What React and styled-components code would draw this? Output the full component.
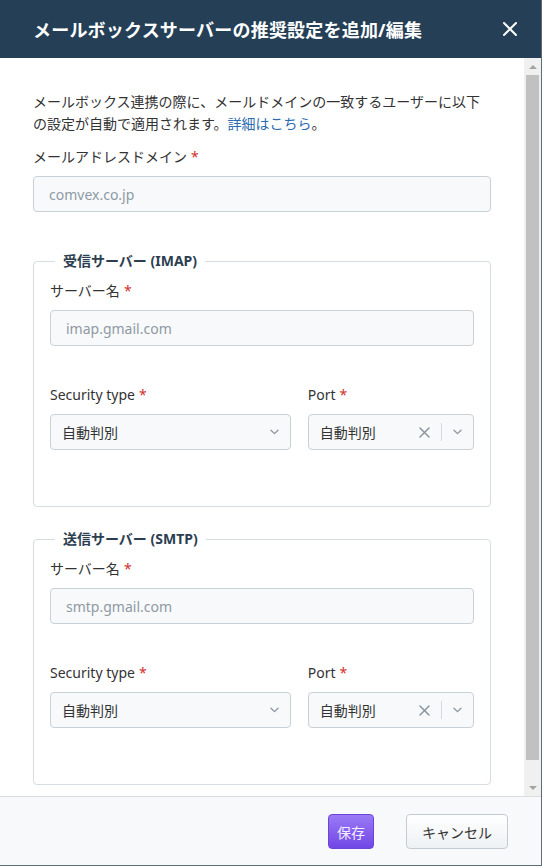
import React from 'react'
import styled, { createGlobalStyle } from 'styled-components'

const GlobalStyle = createGlobalStyle`
  html, body {
    margin: 0;
    padding: 0;
    background: #ffffff;
  }

  body {
    font-family: "Noto Sans", "Noto Sans CJK JP", sans-serif;
    color: #333333;
  }

  * {
    box-sizing: border-box;
  }
`

const Modal = styled.div`
  width: 542px;
  height: 866px;
  display: flex;
  flex-direction: column;
  background: #ffffff;
  border-right: 1px solid #5f6b75;
  border-bottom: 1px solid #5f6b75;
  overflow: hidden;
`

const Header = styled.div`
  height: 58px;
  flex-shrink: 0;
  display: flex;
  align-items: center;
  justify-content: space-between;
  padding: 0 19px 0 33px;
  background: #243f56;

  h2 {
    margin: 0;
    font-size: 18px;
    font-weight: 700;
    color: #ffffff;
    letter-spacing: 0.2px;
  }
`

const CloseButton = styled.button`
  width: 24px;
  height: 24px;
  padding: 0;
  border: none;
  background: none;
  display: flex;
  align-items: center;
  justify-content: center;
  cursor: pointer;
`

const Body = styled.div`
  flex: 1;
  min-height: 0;
  display: flex;
`

const Content = styled.div`
  flex: 1;
  overflow: hidden;
  padding: 33px 33px 0 33px;
`

const Scrollbar = styled.div`
  width: 17px;
  flex-shrink: 0;
  display: flex;
  flex-direction: column;
  background: #f0f0f0;
`

const ScrollArrow = styled.div`
  height: 17px;
  display: flex;
  align-items: center;
  justify-content: center;

  &::before {
    content: '';
    border-left: 4px solid transparent;
    border-right: 4px solid transparent;
    ${(p) => (p.$down ? 'border-top: 4px solid #a3a3a3;' : 'border-bottom: 4px solid #a3a3a3;')}
  }
`

const ScrollTrack = styled.div`
  flex: 1;
  padding: 0 2px 19px;
`

const ScrollThumb = styled.div`
  height: 100%;
  background: #c1c1c1;
`

const Description = styled.p`
  margin: 0;
  font-size: 14px;
  line-height: 22px;
  color: #333333;

  a {
    color: #2b6cb0;
    text-decoration: none;
  }
`

const Field = styled.div`
  margin-top: ${(p) => p.$top || 0}px;
`

const Label = styled.label`
  display: block;
  font-size: 14px;
  line-height: 22px;
  color: #333333;
  margin-bottom: 8px;
`

const Required = styled.span`
  color: #d0312d;
  margin-left: 4px;
`

const TextInput = styled.input`
  width: 100%;
  height: 36px;
  padding: 0 15px;
  border: 1px solid #c8d1d8;
  border-radius: 4px;
  background: #f7f9fb;
  font-family: inherit;
  font-size: 14px;
  color: #333333;
  outline: none;

  &::placeholder {
    color: #8f99a3;
  }
`

const Group = styled.fieldset`
  margin: ${(p) => p.$top}px 0 0;
  padding: 8px 16px 56px;
  border: 1px solid #d6dde3;
  border-radius: 4px;
  min-width: 0;

  legend {
    margin-left: 5px;
    padding: 0 8px;
    font-size: 14px;
    line-height: 22px;
    font-weight: 700;
    color: #2c3e50;
  }
`

const SelectRow = styled.div`
  display: grid;
  grid-template-columns: 242fr 167fr;
  column-gap: 17px;
  margin-top: 38px;
`

const SelectBox = styled.div`
  height: 36px;
  display: flex;
  align-items: center;
  padding: 0 11px 0 11px;
  border: 1px solid #c8d1d8;
  border-radius: 4px;
  background: #f7f9fb;
  font-size: 14px;
  color: #333333;
`

const SelectValue = styled.span`
  flex: 1;
`

const Indicators = styled.div`
  display: flex;
  align-items: center;
  gap: 11px;
`

const Separator = styled.span`
  width: 1px;
  height: 18px;
  background: #d3d9de;
`

const Footer = styled.div`
  height: 69px;
  flex-shrink: 0;
  display: flex;
  justify-content: flex-end;
  align-items: flex-start;
  gap: 32px;
  padding: 17px 33px 0 0;
  background: #f8f9fa;
  border-top: 1px solid #d8dee3;
`

const Button = styled.button`
  height: 35px;
  padding: 0 ${(p) => (p.$primary ? 8 : 15)}px;
  border-radius: 4px;
  font-family: inherit;
  font-size: 14px;
  cursor: pointer;
  border: 1px solid ${(p) => (p.$primary ? '#6a45d8' : '#c3ccd2')};
  color: ${(p) => (p.$primary ? '#f4efff' : '#333333')};
  background: ${(p) =>
    p.$primary
      ? 'linear-gradient(180deg, #9a7bf5 0%, #7146e6 100%)'
      : 'linear-gradient(180deg, #ffffff 0%, #edf1f3 100%)'};
`

function Chevron() {
  return (
    <svg width="9" height="6" viewBox="0 0 9 6" fill="none">
      <path d="M1 1.2L4.5 4.6L8 1.2" stroke="#8a959f" strokeWidth="1.3" strokeLinecap="round" strokeLinejoin="round" />
    </svg>
  )
}

function ClearIcon() {
  return (
    <svg width="11" height="11" viewBox="0 0 11 11" fill="none">
      <path d="M1 1L10 10M10 1L1 10" stroke="#8a959f" strokeWidth="1.5" strokeLinecap="round" />
    </svg>
  )
}

function Select({ value, clearable }) {
  return (
    <SelectBox>
      <SelectValue>{value}</SelectValue>
      <Indicators>
        {clearable && (
          <>
            <ClearIcon />
            <Separator />
          </>
        )}
        <Chevron />
      </Indicators>
    </SelectBox>
  )
}

function ServerGroup({ title, placeholder, top }) {
  return (
    <Group $top={top}>
      <legend>{title}</legend>
      <Label>
        サーバー名<Required>*</Required>
      </Label>
      <TextInput placeholder={placeholder} />
      <SelectRow>
        <div>
          <Label>
            Security type<Required>*</Required>
          </Label>
          <Select value="自動判別" />
        </div>
        <div>
          <Label>
            Port<Required>*</Required>
          </Label>
          <Select value="自動判別" clearable />
        </div>
      </SelectRow>
    </Group>
  )
}

export default function App() {
  return (
    <>
      <GlobalStyle />
      <Modal>
        <Header>
          <h2>メールボックスサーバーの推奨設定を追加/編集</h2>
          <CloseButton aria-label="閉じる">
            <svg width="14" height="14" viewBox="0 0 14 14" fill="none">
              <path d="M1 1L13 13M13 1L1 13" stroke="#ffffff" strokeWidth="2" strokeLinecap="round" />
            </svg>
          </CloseButton>
        </Header>
        <Body>
          <Content>
            <Description>
              メールボックス連携の際に、メールドメインの一致するユーザーに以下
              <br />
              の設定が自動で適用されます。<a href="#">詳細はこちら</a>。
            </Description>
            <Field $top={11}>
              <Label>
                メールアドレスドメイン<Required>*</Required>
              </Label>
              <TextInput placeholder="comvex.co.jp" />
            </Field>
            <ServerGroup title="受信サーバー (IMAP)" placeholder="imap.gmail.com" top={38} />
            <ServerGroup title="送信サーバー (SMTP)" placeholder="smtp.gmail.com" top={21} />
          </Content>
          <Scrollbar>
            <ScrollArrow />
            <ScrollTrack>
              <ScrollThumb />
            </ScrollTrack>
            <ScrollArrow $down />
          </Scrollbar>
        </Body>
        <Footer>
          <Button $primary>保存</Button>
          <Button>キャンセル</Button>
        </Footer>
      </Modal>
    </>
  )
}
